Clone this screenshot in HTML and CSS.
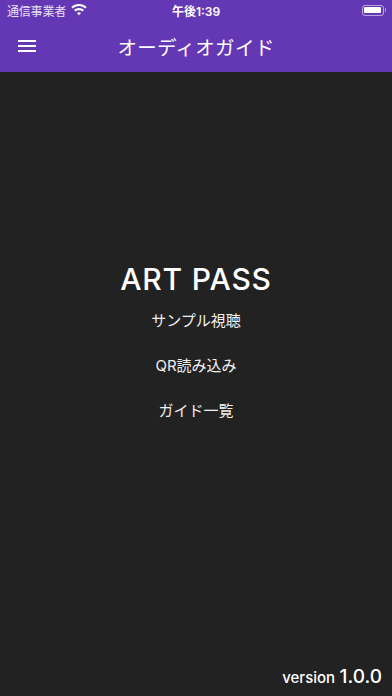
FILE: index.html
```html
<!DOCTYPE html>
<html lang="ja">
<head>
<meta charset="utf-8">
<link rel="stylesheet" href="styles.css">
</head>
<body>
<div class="app">
  <header class="header">
    <div class="status">
      <div class="status-left">
        <span>通信事業者</span>
        <svg class="wifi" width="16" height="12" viewBox="0 0 16 12">
          <path d="M8 0C5 0 2.3 1.2.3 3.1l1.5 1.5C3.4 3 5.6 2.1 8 2.1s4.6.9 6.2 2.5l1.5-1.5C13.7 1.2 11 0 8 0z" fill="#fff"/>
          <path d="M8 4.1c-1.9 0-3.6.7-4.9 1.9l1.5 1.5C5.5 6.7 6.7 6.2 8 6.2s2.5.5 3.4 1.3L12.9 6C11.6 4.8 9.9 4.1 8 4.1z" fill="#fff"/>
          <path d="M8 8.2c-.8 0-1.5.3-2 .8L8 11.2 10 9c-.5-.5-1.2-.8-2-.8z" fill="#fff"/>
        </svg>
      </div>
      <div class="status-time">午後1:39</div>
      <div class="status-right">
        <div class="battery"><div class="battery-fill"></div></div>
        <div class="battery-tip"></div>
      </div>
    </div>
    <div class="appbar">
      <button class="menu" aria-label="menu">
        <span></span><span></span><span></span>
      </button>
      <h1 class="title">オーディオガイド</h1>
    </div>
  </header>
  <main class="main">
    <div class="center">
      <h2 class="brand">ART PASS</h2>
      <a class="item">サンプル視聴</a>
      <a class="item">QR読み込み</a>
      <a class="item">ガイド一覧</a>
    </div>
    <footer class="footer">
      <span class="ver-label">version</span> <span class="ver-num">1.0.0</span>
    </footer>
  </main>
</div>
</body>
</html>
```

FILE: styles.css
```css
* { box-sizing: border-box; }
html, body {
  margin: 0;
  padding: 0;
  background: #222222;
  font-family: Inter, "Noto Sans CJK JP", sans-serif;
  color: #fff;
}
.app {
  width: 392px;
  height: 696px;
  display: flex;
  flex-direction: column;
}
.header {
  background: #6437b5;
}
.status {
  height: 20px;
  display: flex;
  align-items: center;
  justify-content: space-between;
  padding: 0 6px 0 7px;
  font-size: 12px;
  position: relative;
}
.status-left {
  display: flex;
  align-items: center;
  gap: 5px;
  color: #e8e0f4;
}
.status-left span {
  font-size: 12px;
  letter-spacing: -0.2px;
}
.status-time {
  position: absolute;
  left: 0;
  right: 0;
  text-align: center;
  font-weight: 600;
  font-size: 12px;
}
.status-right {
  display: flex;
  align-items: center;
}
.battery {
  width: 22px;
  height: 11px;
  border: 1px solid rgba(255,255,255,0.55);
  border-radius: 3px;
  padding: 1.5px;
}
.battery-fill {
  width: 100%;
  height: 100%;
  background: #fff;
  border-radius: 1px;
}
.battery-tip {
  width: 1.5px;
  height: 4px;
  background: rgba(255,255,255,0.55);
  margin-left: 1px;
  border-radius: 0 1px 1px 0;
}
.appbar {
  height: 52px;
  display: flex;
  align-items: center;
  position: relative;
}
.menu {
  background: none;
  border: 0;
  padding: 0;
  margin-left: 18px;
  width: 18px;
  height: 12px;
  display: flex;
  flex-direction: column;
  justify-content: space-between;
  position: relative;
  z-index: 1;
}
.menu span {
  display: block;
  height: 2px;
  width: 18px;
  background: #fff;
}
.title {
  position: absolute;
  left: 0;
  right: 0;
  margin: 0;
  text-align: center;
  font-weight: 400;
  font-size: 19.5px;
  letter-spacing: 0.3px;
  color: #fff;
}
.main {
  flex: 1;
  display: flex;
  flex-direction: column;
  justify-content: space-between;
}
.center {
  padding-top: 189px;
  display: flex;
  flex-direction: column;
  align-items: center;
}
.brand {
  margin: 0 0 1px;
  font-size: 30px;
  font-weight: 450;
  line-height: 36px;
  letter-spacing: 0.8px;
}
.item {
  display: block;
  font-size: 15px;
  line-height: 45px;
  color: #f0f0f0;
}
.footer {
  text-align: right;
  padding: 0 10px 6px 0;
  line-height: 24px;
}
.ver-label {
  font-size: 15px;
  font-weight: 500;
}
.ver-num {
  font-size: 19px;
  font-weight: 500;
}
```
